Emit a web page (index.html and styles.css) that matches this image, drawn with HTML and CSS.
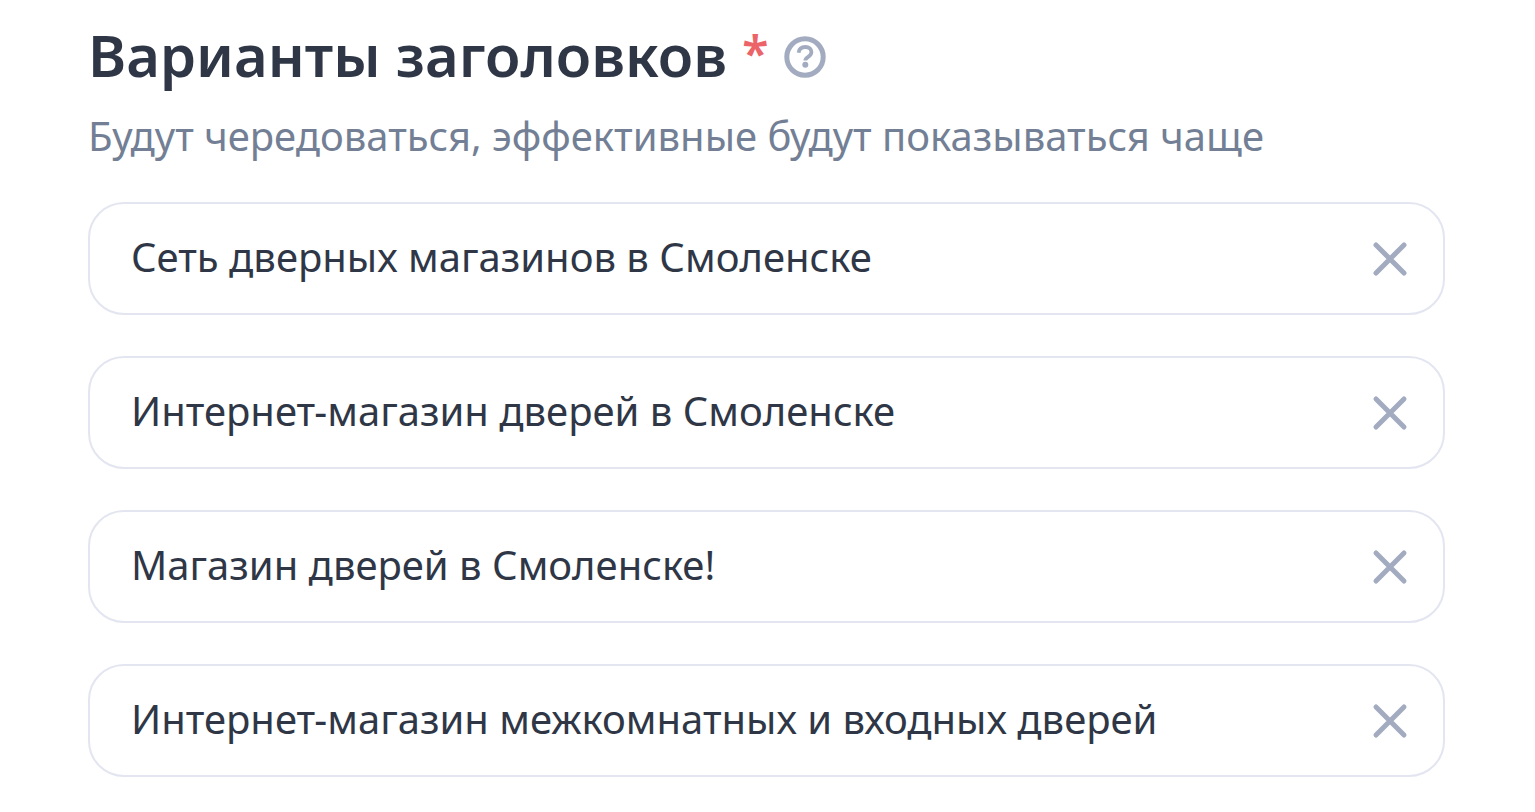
FILE: index.html
```html
<!DOCTYPE html>
<html lang="ru">
<head>
  <meta charset="UTF-8" />
  <meta name="viewport" content="width=device-width, initial-scale=1.0" />
  <title>Варианты заголовков</title>
  <link rel="stylesheet" href="styles.css">
</head>
<body>
  <svg class="sprite" aria-hidden="true">
    <symbol id="cross" viewBox="0 0 36 36">
      <path d="M4 4L32 32M32 4L4 32" fill="none" stroke="currentColor" stroke-width="5" stroke-linecap="round" />
    </symbol>
  </svg>

  <form class="titles">
    <header class="heading">
      <h1>Варианты заголовков <span class="required">*</span></h1>
      <button type="button" class="help" aria-label="Подсказка">
        <svg viewBox="0 0 42 42" fill="none" stroke="currentColor">
          <circle cx="21" cy="21" r="18.2" stroke-width="5" />
          <path d="M14.6 16.8C15 13 17.6 11 21.4 11C25.2 11 27.4 13.2 27.4 16.1C27.4 18.3 26.2 19.6 24.2 20.9C22.2 22.2 21.3 23.1 21.3 24.6" stroke-width="3.8" />
          <circle cx="21.3" cy="28.7" r="3" fill="currentColor" stroke="none" />
        </svg>
      </button>
    </header>
    <p class="hint">Будут чередоваться, эффективные будут показываться чаще</p>

    <div class="fields">
      <div class="field">
        <input type="text" aria-label="Заголовок 1" value="Сеть дверных магазинов в Смоленске" />
        <button type="button" class="clear" aria-label="Удалить"><svg><use href="#cross" /></svg></button>
      </div>
      <div class="field">
        <input type="text" aria-label="Заголовок 2" value="Интернет-магазин дверей в Смоленске" />
        <button type="button" class="clear" aria-label="Удалить"><svg><use href="#cross" /></svg></button>
      </div>
      <div class="field">
        <input type="text" aria-label="Заголовок 3" value="Магазин дверей в Смоленске!" />
        <button type="button" class="clear" aria-label="Удалить"><svg><use href="#cross" /></svg></button>
      </div>
      <div class="field">
        <input type="text" aria-label="Заголовок 4" value="Интернет-магазин межкомнатных и входных дверей" />
        <button type="button" class="clear" aria-label="Удалить"><svg><use href="#cross" /></svg></button>
      </div>
    </div>
  </form>
</body>
</html>
```

FILE: styles.css
```css
*,*::before,*::after{box-sizing:border-box;margin:0;padding:0;}
body{font-family:"Noto Sans","Open Sans",sans-serif;background:#fff;color:#2f3747;}
button{border:none;background:none;color:#a2abbf;cursor:pointer;}
svg{display:block;width:100%;height:100%;}
.sprite{display:none;}

/* ===== layout ===== */
.titles{padding:17px 90px 34px 88px;}
.heading{display:flex;align-items:center;gap:16px;}
h1{padding-bottom:4px;font-size:58px;line-height:76px;font-weight:600;white-space:nowrap;}
.required{font-size:48px;line-height:1;vertical-align:6px;color:#ec6368;}
.help{width:42px;height:42px;flex:none;}
.hint{margin-top:11px;font-size:40px;line-height:56px;color:#737f95;white-space:nowrap;}

/* ===== fields ===== */
.fields{display:grid;gap:41px;margin-top:38px;}
.field{display:flex;align-items:center;height:113px;padding:0 35px 0 41px;border:2px solid #e3e5f0;border-radius:36px;}
.field:focus-within{border-color:#a2abbf;}
.field input{flex:1;min-width:0;padding-bottom:4px;border:none;outline:none;background:none;font:inherit;font-size:40px;line-height:56px;color:inherit;}
.clear{width:36px;height:36px;flex:none;}
```
